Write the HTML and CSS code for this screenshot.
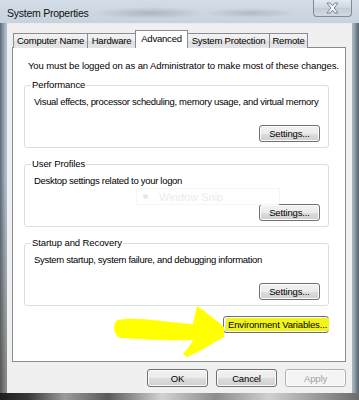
FILE: index.html
```html
<!DOCTYPE html>
<html lang="en">
<head>
    <meta charset="UTF-8">
    <title>System Properties</title>
    <link rel="stylesheet" href="styles.css">
</head>
<body>
    <div class="window">
        <div class="titlebar">
            <span class="title">System Properties</span>
            <div class="close">
                <svg width="15" height="12" viewBox="0 0 15 12">
                    <path d="M2,1 L5.2,1 L7.5,3.8 L9.8,1 L13,1 L9.2,6 L13,11 L9.8,11 L7.5,8.2 L5.2,11 L2,11 L5.8,6 Z" fill="#f4f6f8" stroke="#6d7883" stroke-width="0.9"/>
                </svg>
            </div>
        </div>

        <div class="dialog">
            <div class="tabs">
                <div class="tab tab-cn">Computer Name</div>
                <div class="tab tab-hw">Hardware</div>
                <div class="tab tab-adv active">Advanced</div>
                <div class="tab tab-sp">System Protection</div>
                <div class="tab tab-rm">Remote</div>
            </div>

            <div class="panel">
                <p class="intro">You must be logged on as an Administrator to make most of these changes.</p>

                <fieldset class="group">
                    <legend>Performance</legend>
                    <p class="desc">Visual effects, processor scheduling, memory usage, and virtual memory</p>
                    <div class="group-actions"><button class="btn">Settings...</button></div>
                </fieldset>

                <fieldset class="group">
                    <legend>User Profiles</legend>
                    <p class="desc">Desktop settings related to your logon</p>
                    <div class="group-actions"><button class="btn">Settings...</button></div>
                </fieldset>

                <fieldset class="group">
                    <legend>Startup and Recovery</legend>
                    <p class="desc">System startup, system failure, and debugging information</p>
                    <div class="group-actions"><button class="btn">Settings...</button></div>
                </fieldset>

                <div class="env-row">
                    <button class="btn btn-env"><span class="marker">Environment Variables...</span></button>
                </div>

                <!-- faint snipping tool overlay -->
                <div class="snip">
                    <span class="snip-dot"></span>
                    <span class="snip-text">Window Snip</span>
                </div>

                <!-- hand drawn highlighter arrow -->
                <svg class="arrow" width="130" height="65" viewBox="0 0 130 65">
                    <path d="M17,24 C35,20 60,26 92,28 L96,10 C105,16 115,24 123,31 L123,41 C112,47 100,55 86,61 L82,58 C86,53 90,49 92,44 C70,45 40,43 20,42 C12,40 11,26 17,24 Z" fill="#ffff00"/>
                </svg>
            </div>

            <div class="dialog-buttons">
                <button class="btn btn-main">OK</button>
                <button class="btn btn-main">Cancel</button>
                <button class="btn btn-main" disabled>Apply</button>
            </div>
        </div>
    </div>
</body>
</html>
```

FILE: styles.css
```css
body {
    margin: 0;
    font-family: "Liberation Sans", Arial, sans-serif;
    font-size: 9.5px;
    color: #000;
    background: #fff;
}
.window {
    width: 359px;
    height: 400px;
    box-sizing: border-box;
    display: flex;
    flex-direction: column;
    background:
        linear-gradient(to right, #1e1e1e 0, #3a3a3a 8%, #9b9b9b 18%, #5a5a5a 30%, #d2d2d2 45%, #8c8c8c 60%, #cfcfcf 75%, #6b6b6b 100%) bottom / 100% 7px no-repeat,
        linear-gradient(to bottom, rgba(0, 0, 0, 0) 45%, rgba(80, 60, 30, 0.45) 100%) left / 7px 100% no-repeat,
        linear-gradient(to right, #5d6a78 0, #a9b9c9 1.5%, #c3d0dc 3%, #c8d4df 97%, #9eacba 98.5%, #56606c 100%);
}
.titlebar {
    height: 24px;
    display: flex;
    justify-content: space-between;
    align-items: flex-start;
    padding-left: 7px;
    background:
        radial-gradient(ellipse 55px 6px at 150px 13px, rgba(110, 120, 132, 0.35), transparent),
        radial-gradient(ellipse 45px 5px at 250px 13px, rgba(110, 120, 132, 0.3), transparent),
        linear-gradient(#d3dde7, #c6d2de);
}
.title {
    font-size: 10.5px;
    line-height: 12px;
    padding-top: 7px;
    color: #111;
    letter-spacing: -0.25px;
}
.close {
    width: 39px;
    height: 17px;
    box-sizing: border-box;
    margin-right: 7px;
    border: 1px solid #7f8c99;
    border-top: none;
    border-radius: 0 0 4px 4px;
    background: linear-gradient(#e3e9ef, #cdd6df 50%, #c1ccd7 51%, #d1dae3);
    display: flex;
    align-items: center;
    justify-content: center;
}
.dialog {
    flex: 1;
    margin: 0 7px 7px;
    background: #f0f0f0;
    padding: 6px 6px 6px 5px;
    display: flex;
    flex-direction: column;
    border-top: 1px solid #e8ecf0;
    box-sizing: border-box;
}
.tabs {
    display: flex;
    align-items: flex-end;
    height: 18px;
    padding-left: 1px;
    position: relative;
    z-index: 1;
    margin-bottom: -1px;
}
.tab {
    height: 15px;
    box-sizing: border-box;
    border: 1px solid #898c95;
    border-bottom: none;
    margin-right: -1px;
    background: linear-gradient(#f3f3f3, #ebebeb 50%, #dedede 51%, #e5e5e5);
    text-align: center;
    line-height: 14px;
    letter-spacing: -0.2px;
    white-space: nowrap;
}
.tab.active {
    height: 18px;
    background: #fff;
    line-height: 16px;
    position: relative;
    z-index: 2;
}
.tab-cn { width: 75px; }
.tab-hw { width: 49px; }
.tab-adv { width: 53px; }
.tab-sp { width: 83px; }
.tab-rm { width: 39px; }
.panel {
    height: 315px;
    box-sizing: border-box;
    background: #fff;
    border: 1px solid #898c95;
    padding: 12px 16px 0 11px;
    position: relative;
}
.intro {
    margin: 0 0 7px 4px;
    line-height: 12px;
    letter-spacing: -0.1px;
    white-space: nowrap;
}
.group {
    margin: 0 0 10px;
    padding: 5px 8px 5px 8px;
    border: 1px solid #d5dfe5;
    border-radius: 3px;
    min-width: 0;
}
.group legend {
    padding: 0 1px;
    margin-left: -2px;
    line-height: 12px;
    letter-spacing: -0.1px;
}
.desc {
    margin: 0 0 17px 1px;
    line-height: 12px;
    letter-spacing: -0.3px;
    white-space: nowrap;
}
.group-actions {
    display: flex;
    justify-content: flex-end;
}
.btn {
    width: 61px;
    height: 17px;
    box-sizing: border-box;
    padding: 0;
    border: 1px solid #707070;
    border-radius: 3px;
    background: linear-gradient(#f2f2f2, #ebebeb 50%, #dddddd 51%, #cfcfcf);
    box-shadow: inset 0 0 0 1px #fbfbfb;
    font-family: inherit;
    font-size: 9.5px;
    color: #000;
    letter-spacing: -0.15px;
    white-space: nowrap;
}
.btn:disabled {
    color: #a3a3a3;
    border-color: #adb2b5;
    background: #f4f4f4;
}
.env-row {
    display: flex;
    justify-content: flex-end;
    margin-top: 5px;
}
.btn-env {
    width: 106px;
    text-align: left;
    padding-left: 2px;
}
.marker {
    display: inline-block;
    background: #f2f21c;
    padding: 1px 2px;
    line-height: 11px;
}
.dialog-buttons {
    display: flex;
    justify-content: flex-end;
    gap: 8px;
    margin-top: 7px;
}
.btn-main {
    height: 18px;
}
.snip {
    position: absolute;
    left: 123px;
    top: 140px;
    width: 144px;
    height: 17px;
    box-sizing: border-box;
    border: 1px solid #f5f5f5;
    border-radius: 2px;
    display: flex;
    align-items: center;
    gap: 11px;
    padding-left: 6px;
    pointer-events: none;
}
.snip-dot {
    width: 5px;
    height: 5px;
    border-radius: 50%;
    background: #e8e8e8;
}
.snip-text {
    font-size: 11px;
    color: #ececec;
}
.arrow {
    position: absolute;
    left: 88px;
    top: 248px;
}
```
